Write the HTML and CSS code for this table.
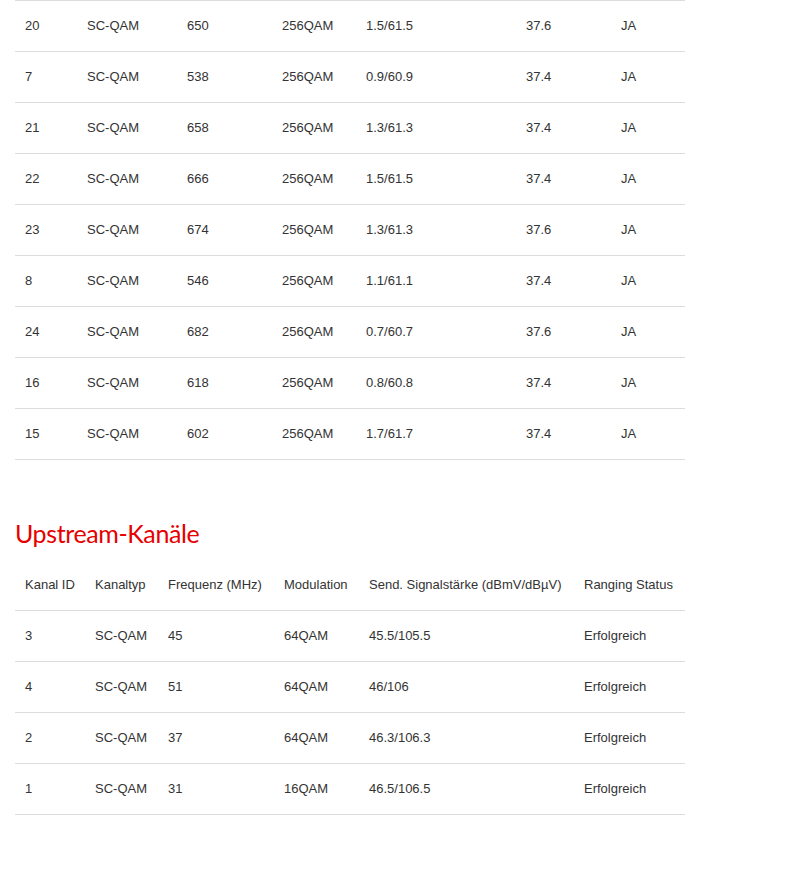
FILE: index.html
```html
<!DOCTYPE html>
<html lang="de">
<head>
<meta charset="utf-8">
<title>Kanäle</title>
<link rel="stylesheet" href="styles.css">
</head>
<body>
<div class="page">
  <table class="tbl down">
    <colgroup>
      <col class="d1"><col class="d2"><col class="d3"><col class="d4"><col class="d5"><col class="d6"><col class="d7">
    </colgroup>
    <tbody>
      <tr><td>20</td><td>SC-QAM</td><td>650</td><td>256QAM</td><td>1.5/61.5</td><td>37.6</td><td>JA</td></tr>
      <tr><td>7</td><td>SC-QAM</td><td>538</td><td>256QAM</td><td>0.9/60.9</td><td>37.4</td><td>JA</td></tr>
      <tr><td>21</td><td>SC-QAM</td><td>658</td><td>256QAM</td><td>1.3/61.3</td><td>37.4</td><td>JA</td></tr>
      <tr><td>22</td><td>SC-QAM</td><td>666</td><td>256QAM</td><td>1.5/61.5</td><td>37.4</td><td>JA</td></tr>
      <tr><td>23</td><td>SC-QAM</td><td>674</td><td>256QAM</td><td>1.3/61.3</td><td>37.6</td><td>JA</td></tr>
      <tr><td>8</td><td>SC-QAM</td><td>546</td><td>256QAM</td><td>1.1/61.1</td><td>37.4</td><td>JA</td></tr>
      <tr><td>24</td><td>SC-QAM</td><td>682</td><td>256QAM</td><td>0.7/60.7</td><td>37.6</td><td>JA</td></tr>
      <tr><td>16</td><td>SC-QAM</td><td>618</td><td>256QAM</td><td>0.8/60.8</td><td>37.4</td><td>JA</td></tr>
      <tr><td>15</td><td>SC-QAM</td><td>602</td><td>256QAM</td><td>1.7/61.7</td><td>37.4</td><td>JA</td></tr>
    </tbody>
  </table>

  <h2 class="section-title">Upstream-Kanäle</h2>

  <table class="tbl up">
    <colgroup>
      <col class="u1"><col class="u2"><col class="u3"><col class="u4"><col class="u5"><col class="u6">
    </colgroup>
    <thead>
      <tr><th>Kanal ID</th><th>Kanaltyp</th><th>Frequenz (MHz)</th><th>Modulation</th><th>Send. Signalstärke (dBmV/dBµV)</th><th>Ranging Status</th></tr>
    </thead>
    <tbody>
      <tr><td>3</td><td>SC-QAM</td><td>45</td><td>64QAM</td><td>45.5/105.5</td><td>Erfolgreich</td></tr>
      <tr><td>4</td><td>SC-QAM</td><td>51</td><td>64QAM</td><td>46/106</td><td>Erfolgreich</td></tr>
      <tr><td>2</td><td>SC-QAM</td><td>37</td><td>64QAM</td><td>46.3/106.3</td><td>Erfolgreich</td></tr>
      <tr><td>1</td><td>SC-QAM</td><td>31</td><td>16QAM</td><td>46.5/106.5</td><td>Erfolgreich</td></tr>
    </tbody>
  </table>
</div>
</body>
</html>
```
FILE: styles.css
```css
html, body {
  margin: 0;
  padding: 0;
  background: #fff;
}
body {
  font-family: "Liberation Sans", Arial, sans-serif;
  font-size: 13px;
  color: #333;
}
.page {
  width: 670px;
  padding: 0 15px;
}
.tbl {
  width: 670px;
  border-collapse: collapse;
  table-layout: fixed;
  margin: 0;
}
.tbl td, .tbl th {
  padding: 16px 10px;
  text-align: left;
  vertical-align: middle;
  font-weight: normal;
  border-top: 1px solid #ddd;
  line-height: 18px;
  white-space: nowrap;
}
.tbl th {
  border-top: 0;
  border-bottom: 1px solid #ddd;
}
.tbl tbody tr:last-child td {
  border-bottom: 1px solid #ddd;
}
.d1 { width: 62px; }
.d2 { width: 100px; }
.d3 { width: 95px; }
.d4 { width: 84px; }
.d5 { width: 160px; }
.d6 { width: 95px; }
.d7 { width: 74px; }

.u1 { width: 70px; }
.u2 { width: 73px; }
.u3 { width: 116px; }
.u4 { width: 85px; }
.u5 { width: 215px; }
.u6 { width: 111px; }

.section-title {
  margin: 55px 0 9px;
  font-family: Lato, "Open Sans", sans-serif;
  font-weight: normal;
  font-size: 25px;
  letter-spacing: -0.4px;
  line-height: 36px;
  color: #e60000;
}
```
